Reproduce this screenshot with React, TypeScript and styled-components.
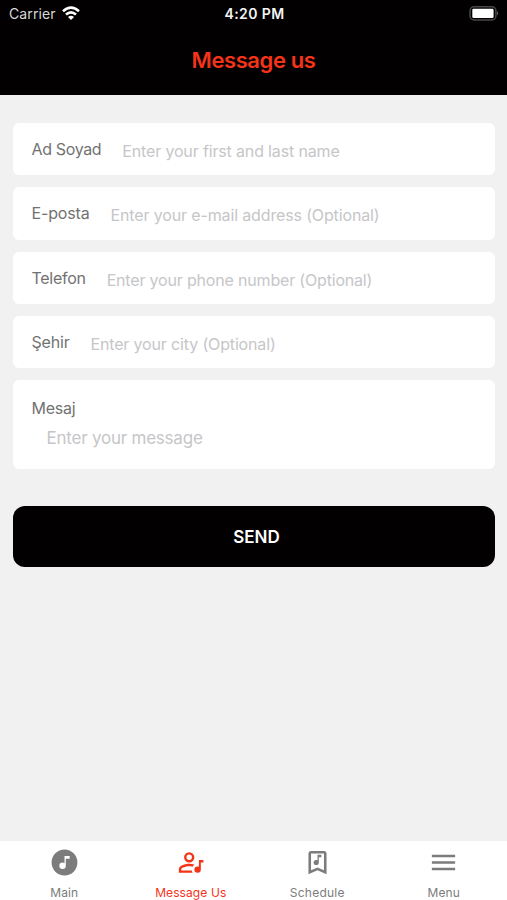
import React from 'react';
import styled, { createGlobalStyle } from 'styled-components';

const GlobalStyle = createGlobalStyle`
  *, *::before, *::after { box-sizing: border-box; }
  body { margin: 0; background: #f1f1f1; font-family: Inter, "Liberation Sans", sans-serif; }
`;

const Screen = styled.div`
  display: flex;
  flex-direction: column;
  height: 900px;
  overflow: hidden;
  background: #f1f1f1;
`;

const Header = styled.header`
  height: 95px;
  flex: none;
  background: #020001;
`;

const StatusBar = styled.div`
  display: grid;
  grid-template-columns: 1fr auto 1fr;
  align-items: center;
  height: 26px;
  padding: 0 7px 0 9px;
  color: #f4f4f4;
`;

const Carrier = styled.div`
  display: flex;
  align-items: center;
  gap: 6px;
  font-size: 14px;
  letter-spacing: 0.1px;
  color: #d8d8d8;
`;

const Clock = styled.div`
  font-size: 14px;
  font-weight: 600;
  letter-spacing: 0.4px;
`;

const BatterySlot = styled.div`
  display: flex;
  justify-content: flex-end;
`;

const Title = styled.h1`
  margin: 19px 0 0;
  text-align: center;
  font-size: 22px;
  line-height: 30px;
  font-weight: 600;
  letter-spacing: -0.4px;
  color: #f53319;
`;

const Form = styled.form`
  display: flex;
  flex-direction: column;
  flex: 1;
  gap: 12px;
  padding: 28px 12.5px 0;
`;

const Field = styled.label`
  display: flex;
  align-items: center;
  gap: 21px;
  height: 52.3px;
  padding: 0 19px;
  border-radius: 6px;
  background: #fff;
`;

const MessageField = styled.label`
  display: flex;
  flex-direction: column;
  height: 89px;
  padding: 18px 19px 0;
  border-radius: 6px;
  background: #fff;
`;

const Label = styled.span<{ $tracking?: number }>`
  font-size: 16px;
  line-height: 20px;
  letter-spacing: ${({ $tracking = 0 }) => $tracking}px;
  color: #727272;
`;

const Input = styled.input<{ $tracking?: number; $size?: number }>`
  flex: 1;
  min-width: 0;
  padding: 4px 0 0;
  border: 0;
  outline: 0;
  background: transparent;
  font-family: inherit;
  font-size: ${({ $size = 16 }) => $size}px;
  letter-spacing: ${({ $tracking = 0 }) => $tracking}px;
  color: #727272;
  &::placeholder { color: #c6c6c8; opacity: 1; }
`;

const MessageInput = styled(Input)`
  flex: none;
  height: 30px;
  margin: 5px 0 0 15px;
  padding: 0;
`;

const SendButton = styled.button`
  height: 61px;
  margin-top: 25px;
  padding: 0 0 0 6px;
  border: 0;
  border-radius: 12px;
  background: #020001;
  color: #fff;
  font-family: inherit;
  font-size: 17px;
  font-weight: 600;
`;

const TabBar = styled.nav`
  display: grid;
  grid-template-columns: repeat(4, 1fr);
  flex: none;
  height: 59px;
  padding-left: 1px;
  background: #fff;
`;

const Tab = styled.a<{ $active?: boolean }>`
  display: flex;
  flex-direction: column;
  align-items: center;
  padding-top: 6px;
  color: ${({ $active }) => ($active ? '#f53319' : '#7c7c7c')};
`;

const TabIcon = styled.svg`
  width: 31px;
  height: 31px;
  flex: none;
  fill: currentColor;
`;

const TabLabel = styled.span<{ $tracking: number }>`
  margin-top: 7px;
  font-size: 12px;
  line-height: 16px;
  letter-spacing: ${({ $tracking }) => $tracking}px;
`;

const fields = [
  { label: 'Ad Soyad', placeholder: 'Enter your first and last name', tracking: -0.35, hint: -0.15 },
  { label: 'E-posta', placeholder: 'Enter your e-mail address (Optional)', tracking: -0.15, hint: -0.14 },
  { label: 'Telefon', placeholder: 'Enter your phone number (Optional)', tracking: -0.28, hint: -0.18 },
  { label: 'Şehir', placeholder: 'Enter your city (Optional)', tracking: -0.2, hint: -0.15 },
];

const tabs = [
  {
    label: 'Main',
    tracking: 0.1,
    path: 'M16,9V7H12V12.5C11.58,12.19 11.07,12 10.5,12A2.5,2.5 0 0,0 8,14.5A2.5,2.5 0 0,0 10.5,17A2.5,2.5 0 0,0 13,14.5V9H16M12,2A10,10 0 0,1 22,12A10,10 0 0,1 12,22A10,10 0 0,1 2,12A10,10 0 0,1 12,2Z',
  },
  {
    label: 'Message Us',
    tracking: 0.1,
    active: true,
    path: 'M11,4A4,4 0 0,1 15,8A4,4 0 0,1 11,12A4,4 0 0,1 7,8A4,4 0 0,1 11,4M11,5.9A2.1,2.1 0 0,0 8.9,8A2.1,2.1 0 0,0 11,10.1A2.1,2.1 0 0,0 13.1,8A2.1,2.1 0 0,0 11,5.9M11,13C12.1,13 13.66,13.23 15.11,13.69C14.5,14.07 14,14.6 13.61,15.23C12.79,15.03 11.89,14.9 11,14.9C8.03,14.9 4.9,16.36 4.9,17V18.1H13.04C13.13,18.8 13.38,19.44 13.76,20H3V17C3,14.34 8.33,13 11,13M18.5,10H22V12H20V17.5A2.5,2.5 0 0,1 17.5,20A2.5,2.5 0 0,1 15,17.5A2.5,2.5 0 0,1 17.5,15C17.86,15 18.19,15.07 18.5,15.21V10Z',
  },
  {
    label: 'Schedule',
    tracking: 0.25,
    path: 'M17,18V5H7V18L12,15.82L17,18M17,3A2,2 0 0,1 19,5V21L12,18L5,21V5C5,3.89 5.9,3 7,3H17M11,14A2,2 0 0,1 9,12A2,2 0 0,1 11,10C11.4,10 11.7,10.1 12,10.3V6H15V8H13V12A2,2 0 0,1 11,14Z',
  },
  {
    label: 'Menu',
    tracking: 0.1,
    path: 'M3,6H21V8H3V6M3,11H21V13H3V11M3,16H21V18H3V16Z',
  },
];

function WifiIcon() {
  return (
    <svg width="18" height="14" viewBox="0 0 18 14" fill="none" stroke="#fff" strokeWidth="2.6">
      <path d="M1 5.2Q9 -1.8 17 5.2" />
      <path d="M4 8.6Q9 4.3 14 8.6" />
      <path d="M9 14L6 10.9Q9 8.5 12 10.9Z" fill="#fff" stroke="none" />
    </svg>
  );
}

function BatteryIcon() {
  return (
    <svg width="31" height="15" viewBox="0 0 31 15">
      <rect x="1" y="0.8" width="25.9" height="13.2" rx="4" fill="none" stroke="#484848" strokeWidth="1.5" />
      <rect x="3.3" y="2.8" width="21.3" height="9.2" rx="1.3" fill="#fff" />
      <path d="M28 5Q30.5 7.3 28 9.6Z" fill="#606060" />
    </svg>
  );
}

export default function App() {
  return (
    <>
      <GlobalStyle />
      <Screen>
        <Header>
          <StatusBar>
            <Carrier>Carrier <WifiIcon /></Carrier>
            <Clock>4:20 PM</Clock>
            <BatterySlot><BatteryIcon /></BatterySlot>
          </StatusBar>
          <Title>Message us</Title>
        </Header>
        <Form>
          {fields.map((f) => (
            <Field key={f.label}>
              <Label $tracking={f.tracking}>{f.label}</Label>
              <Input placeholder={f.placeholder} $tracking={f.hint} />
            </Field>
          ))}
          <MessageField>
            <Label $tracking={-0.25}>Mesaj</Label>
            <MessageInput placeholder="Enter your message" $size={17} $tracking={-0.22} />
          </MessageField>
          <SendButton type="button">SEND</SendButton>
        </Form>
        <TabBar>
          {tabs.map((t) => (
            <Tab key={t.label} $active={t.active}>
              <TabIcon viewBox="0 0 24 24"><path d={t.path} /></TabIcon>
              <TabLabel $tracking={t.tracking}>{t.label}</TabLabel>
            </Tab>
          ))}
        </TabBar>
      </Screen>
    </>
  );
}
